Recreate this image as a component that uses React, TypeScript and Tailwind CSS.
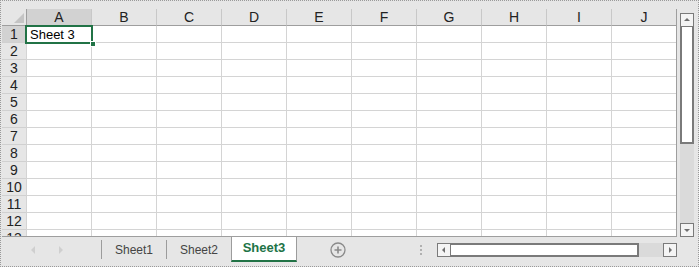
import type { FC } from 'react';

const cols = ['A', 'B', 'C', 'D', 'E', 'F', 'G', 'H', 'I', 'J'];
const rows = [1, 2, 3, 4, 5, 6, 7, 8, 9, 10, 11, 12, 13];

const ScrollButton: FC<{ dir: 'up' | 'down' | 'left' | 'right' }> = ({ dir }) => {
  const points = {
    up: '2,6 5,3 8,6',
    down: '2,4 5,7 8,4',
    left: '6,2 3,5 6,8',
    right: '4,2 7,5 4,8',
  }[dir];
  return (
    <div className="w-[14px] h-[14px] border border-[#7a7a7a] bg-[#f4f4f4] flex items-center justify-center shrink-0">
      <svg width="10" height="10" viewBox="0 0 10 10">
        <polygon points={points} fill="#6f6f6f" />
      </svg>
    </div>
  );
};

const App: FC = () => {
  return (
    <div
      className="w-[699px] h-[267px] bg-[#e6e6e6] border border-dotted border-[#9a9a9a] flex flex-col overflow-hidden"
      style={{ fontFamily: '"Liberation Sans", Arial, sans-serif' }}
    >
      {/* Sheet area + vertical scrollbar */}
      <div className="flex pt-[8px] pl-[1px] h-[236px]">
        <div className="w-[675px] h-[228px] overflow-hidden bg-white border-r border-b border-[#9e9e9e] relative">
          <div className="grid grid-cols-[24px_repeat(10,65px)] auto-rows-[17px]">
            {/* corner */}
            <div className="bg-[#e6e6e6] border-b border-[#9e9e9e] flex items-end justify-end pr-[2px] pb-[2px]">
              <svg width="10" height="10" viewBox="0 0 10 10">
                <polygon points="10,0 10,10 0,10" fill="#c4c4c4" />
              </svg>
            </div>
            {cols.map((c, i) => (
              <div
                key={c}
                className={`flex items-center justify-center text-[14px] text-[#222] border-b border-[#9e9e9e] ${
                  i === 0 ? 'bg-[#d2d2d2] border-l border-[#9e9e9e]' : 'bg-[#e6e6e6] border-l border-l-[#c8c8c8]'
                }`}
              >
                {c}
              </div>
            ))}
            {rows.map((r) => (
              <div key={r} className="contents">
                <div
                  className={`flex items-center justify-center pt-[1px] text-[14px] text-[#222] border-b border-[#d0d0d0] ${
                    r === 1 ? 'bg-[#d2d2d2]' : 'bg-[#e6e6e6]'
                  }`}
                >
                  {r}
                </div>
                {cols.map((c) => (
                  <div key={c} className="border-l border-b border-[#d4d4d4] text-[13px] text-black flex items-center pl-[3px] pt-[1px] leading-none">
                    {r === 1 && c === 'A' ? 'Sheet 3' : ''}
                  </div>
                ))}
              </div>
            ))}
          </div>
          {/* active cell selection */}
          <div className="absolute left-[23px] top-[16px] w-[68px] h-[19px] border-2 border-[#217346]" />
          <div className="absolute left-[88px] top-[32px] w-[6px] h-[6px] bg-[#217346] border border-white" />
        </div>

        {/* vertical scrollbar */}
        <div className="ml-[3px] w-[14px] flex flex-col pt-[4px] h-[228px]">
          <ScrollButton dir="up" />
          <div className="flex-1 flex flex-col bg-[#dadada]">
            <div className="h-[117px] bg-white border-2 border-[#7a7a7a] border-t-0" />
          </div>
          <ScrollButton dir="down" />
        </div>
      </div>

      {/* Tab bar */}
      <div className="flex items-center h-[25px] text-[12px] text-[#444]">
        <div className="w-[100px] flex items-center pl-[28px] gap-[20px]">
          <svg width="8" height="10" viewBox="0 0 8 10">
            <polygon points="6,1 2,5 6,9" fill="#cfcfcf" />
          </svg>
          <svg width="8" height="10" viewBox="0 0 8 10">
            <polygon points="2,1 6,5 2,9" fill="#cfcfcf" />
          </svg>
        </div>
        <div className="w-px h-[19px] bg-[#9c9c9c]" />
        <div className="w-[64px] text-center">Sheet1</div>
        <div className="w-px h-[19px] bg-[#9c9c9c]" />
        <div className="w-[64px] text-center">Sheet2</div>
        <div className="w-[66px] h-[25px] -mt-[1px] bg-white border-x border-[#9c9c9c] border-b-2 border-b-[#217346] flex items-center justify-center font-bold text-[13px] text-[#217346]">
          Sheet3
        </div>
        <div className="w-[82px] flex justify-center">
          <svg width="16" height="16" viewBox="0 0 16 16">
            <circle cx="8" cy="8" r="7" fill="none" stroke="#8a8a8a" strokeWidth="1.3" />
            <path d="M8 4.5v7M4.5 8h7" stroke="#8a8a8a" strokeWidth="1.6" />
          </svg>
        </div>
        <div className="ml-[41px] flex flex-col gap-[2px]">
          <span className="w-[2px] h-[2px] bg-[#b0b0b0]" />
          <span className="w-[2px] h-[2px] bg-[#b0b0b0]" />
          <span className="w-[2px] h-[2px] bg-[#b0b0b0]" />
        </div>
        <div className="flex items-center w-[240px] ml-[15px]">
          <ScrollButton dir="left" />
          <div className="flex-1 flex h-[14px] bg-[#dadada]">
            <div className="w-[188px] bg-white border-2 border-l-0 border-[#7a7a7a]" />
          </div>
          <ScrollButton dir="right" />
        </div>
      </div>
    </div>
  );
};

export default App;
